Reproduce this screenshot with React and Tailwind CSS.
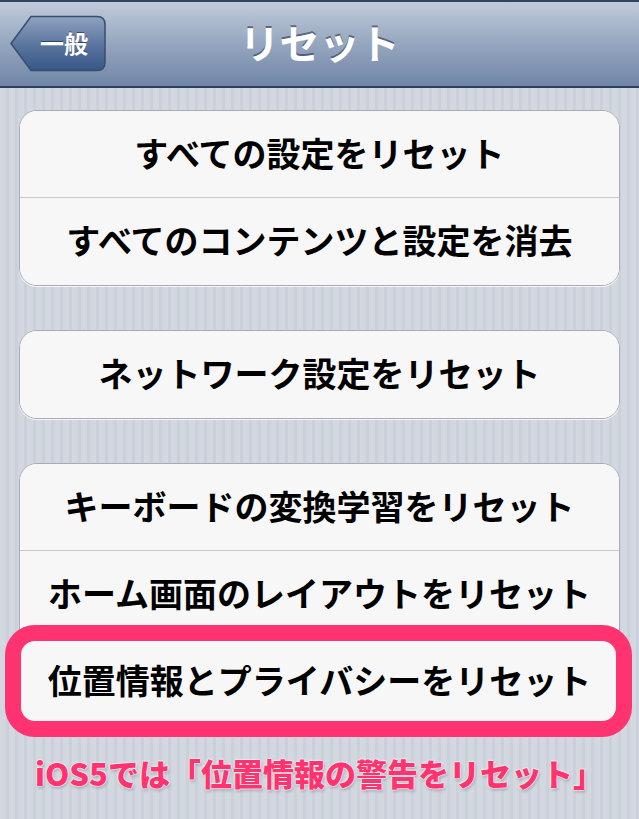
import React from "react";

const font = { fontFamily: '"Noto Sans CJK JP", "Noto Sans", sans-serif' };

function Row({ label, last }) {
  return (
    <div className={"flex h-[87px] items-center justify-center bg-[#f7f7f7] pb-[4px] text-[34px] font-bold text-black " + (last ? "" : "border-b border-[#c9c9cb]")}>
      {label}
    </div>
  );
}

function Group({ items, children }) {
  return (
    <div className="relative mx-[19px] rounded-[18px] border border-[#a8abb3] bg-[#f7f7f7] shadow-[0_1px_0_rgba(255,255,255,0.8)]">
      <div className="overflow-hidden rounded-[17px]">
        {items.map((label, i) => (
          <Row key={label} label={label} last={i === items.length - 1} />
        ))}
      </div>
      {children}
    </div>
  );
}

export default function App() {
  return (
    <div className="h-[819px] w-[639px] overflow-hidden bg-[repeating-linear-gradient(90deg,#d2d7e0_0px,#d2d7e0_6px,#cbd1db_6px,#cbd1db_9px)]" style={font}>
      {/* nav bar */}
      <div className="relative flex h-[88px] items-center justify-center border-t-2 border-b-2 border-t-[#2f4462] border-b-[#2d3f5c] bg-[linear-gradient(#bfcbda,#95a6bf_50%,#6f86a6)] pb-[5px]">
        <div className="absolute left-[10px] top-[13px] flex h-[57px] items-center">
          <svg width="96" height="57" viewBox="0 0 96 57" className="absolute left-0 top-0">
            <defs>
              <linearGradient id="bb" x1="0" y1="0" x2="0" y2="1">
                <stop offset="0" stopColor="#8fa3c0" />
                <stop offset="0.5" stopColor="#5c77a0" />
                <stop offset="1" stopColor="#375788" />
              </linearGradient>
            </defs>
            <path d="M1 28.5 L21 1.5 H87 Q95 1.5 95 9.5 V47.5 Q95 55.5 87 55.5 H21 Z" fill="url(#bb)" stroke="#3a4d6b" strokeWidth="1.5" />
          </svg>
          <span className="relative ml-[30px] pb-[2px] text-[24px] font-bold text-white [text-shadow:0_-1px_0_rgba(0,0,0,0.45)]">一般</span>
        </div>
        <span className="text-[40px] font-bold text-white [text-shadow:0_-2px_0_rgba(40,55,80,0.6)]">リセット</span>
      </div>

      <div className="flex flex-col gap-[44px] pt-[22px]">
        <Group items={["すべての設定をリセット", "すべてのコンテンツと設定を消去"]} />
        <Group items={["ネットワーク設定をリセット"]} />
        <Group items={["キーボードの変換学習をリセット", "ホーム画面のレイアウトをリセット", "位置情報とプライバシーをリセット"]}>
          <div className="absolute -left-[15px] -right-[13px] top-[161px] h-[112px] rounded-[30px] border-[16px] border-[#ff3370]" />
        </Group>
      </div>

      <div className="mt-[24px] text-center text-[31px] font-black text-[#ff3370] [text-shadow:0_0_2px_#fff,0_0_2px_#fff,0_0_1px_#fff,1px_2px_3px_rgba(0,0,0,0.25)]">
        iOS5では「位置情報の警告をリセット」
      </div>
    </div>
  );
}
